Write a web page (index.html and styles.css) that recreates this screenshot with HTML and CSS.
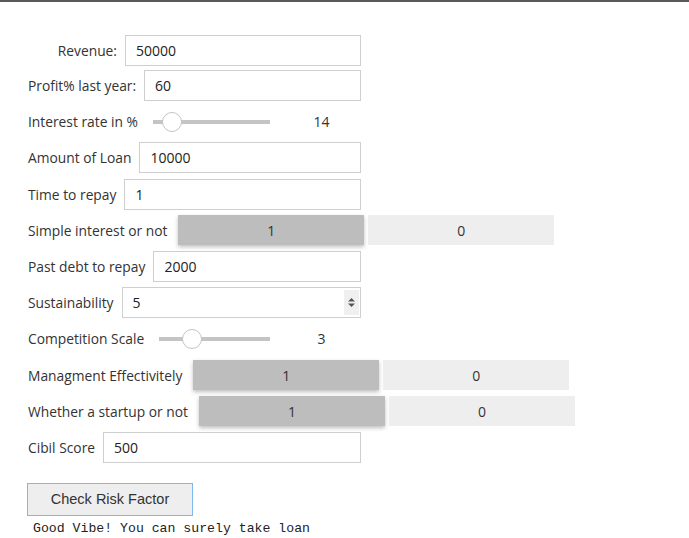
FILE: index.html
```html
<!DOCTYPE html>
<html>
<head>
<meta charset="utf-8">
<link rel="stylesheet" href="styles.css">
</head>
<body>
<div class="topbar"></div>
<div class="form">
  <div class="row">
    <label class="lbl lbl-revenue">Revenue:</label>
    <input class="field" type="text" value="50000">
  </div>
  <div class="row">
    <label class="lbl">Profit% last year:</label>
    <input class="field" type="text" value="60">
  </div>
  <div class="row">
    <label class="lbl">Interest rate in %</label>
    <div class="slider">
      <div class="track"><div class="thumb" style="left:16%"></div></div>
      <div class="readout">14</div>
    </div>
  </div>
  <div class="row">
    <label class="lbl">Amount of Loan</label>
    <input class="field" type="text" value="10000">
  </div>
  <div class="row">
    <label class="lbl">Time to repay</label>
    <input class="field" type="text" value="1">
  </div>
  <div class="row">
    <label class="lbl">Simple interest or not</label>
    <div class="toggles">
      <button class="tog sel">1</button>
      <button class="tog">0</button>
    </div>
  </div>
  <div class="row">
    <label class="lbl">Past debt to repay</label>
    <input class="field" type="text" value="2000">
  </div>
  <div class="row">
    <label class="lbl">Sustainability</label>
    <div class="field numfield">
      <span class="numval">5</span>
      <span class="spin">
        <svg width="9" height="11" viewBox="0 0 9 11"><path d="M4.5 1 L8 4.5 H1 Z M4.5 10 L8 6.5 H1 Z" fill="#555"/></svg>
      </span>
    </div>
  </div>
  <div class="row">
    <label class="lbl">Competition Scale</label>
    <div class="slider">
      <div class="track"><div class="thumb" style="left:30%"></div></div>
      <div class="readout">3</div>
    </div>
  </div>
  <div class="row">
    <label class="lbl">Managment Effectivitely</label>
    <div class="toggles">
      <button class="tog sel">1</button>
      <button class="tog">0</button>
    </div>
  </div>
  <div class="row">
    <label class="lbl">Whether a startup or not</label>
    <div class="toggles">
      <button class="tog sel">1</button>
      <button class="tog">0</button>
    </div>
  </div>
  <div class="row">
    <label class="lbl">Cibil Score</label>
    <input class="field" type="text" value="500">
  </div>
  <button class="check">Check Risk Factor</button>
  <pre class="output">Good Vibe! You can surely take loan</pre>
</div>
</body>
</html>
```

FILE: styles.css
```css
html, body {
  margin: 0;
  padding: 0;
  background: #fff;
}
.topbar {
  height: 2px;
  background: #5a5a5a;
}
.form {
  padding: 33px 0 0 28px;
  font-family: "Open Sans", "Noto Sans", sans-serif;
  font-size: 13.8px;
  color: #333;
}
.row {
  display: flex;
  align-items: center;
  height: 31px;
  margin-bottom: 5.2px;
  width: 333px;
}
.row:first-child {
  margin-bottom: 4px;
}
.lbl {
  flex: none;
  margin-right: 8px;
  white-space: nowrap;
  color: #333;
}
.lbl-revenue {
  width: 89px;
  text-align: right;
}
.field {
  flex: 1;
  box-sizing: border-box;
  height: 31px;
  border: 1px solid #cfcfcf;
  padding: 0 10px;
  font-family: inherit;
  font-size: 14px;
  color: #222;
  background: #fff;
  outline: none;
  min-width: 0;
}
.numfield {
  display: flex;
  align-items: center;
  padding-right: 1px;
}
.numval {
  flex: 1;
}
.spin {
  display: flex;
  align-items: center;
  justify-content: center;
  width: 15px;
  height: 25px;
  background: #f0f0f0;
}
.slider {
  flex: 1;
  display: flex;
  align-items: center;
  padding-left: 7px;
}
.track {
  position: relative;
  flex: 1;
  height: 4px;
  background: #c4c4c4;
  margin-right: 12px;
}
.thumb {
  position: absolute;
  top: 50%;
  width: 18px;
  height: 18px;
  margin: -10px 0 0 -10px;
  border: 1px solid #c4c4c4;
  border-radius: 50%;
  background: #fff;
}
.readout {
  width: 79px;
  text-align: center;
  font-size: 14px;
  color: #333;
}
.toggles {
  display: flex;
  gap: 4px;
  margin-left: 3px;
}
.tog {
  width: 186px;
  height: 30px;
  border: none;
  background: #eeeeee;
  font-family: inherit;
  font-size: 14px;
  color: #333;
  padding: 0;
}
.tog.sel {
  background: #bdbdbd;
  box-shadow: 0 2px 4px rgba(0,0,0,0.25);
}
.check {
  display: block;
  margin: 20px 0 0 -1px;
  width: 166px;
  height: 33px;
  background: #eeeeee;
  border: 1px solid #7fb8ec;
  font-family: "Liberation Sans", Arial, sans-serif;
  font-size: 14.5px;
  color: #333;
  padding: 0;
}
.output {
  margin: 5px 0 0 5px;
  font-family: "Liberation Mono", "DejaVu Sans Mono", monospace;
  font-size: 13.2px;
  color: #222;
}
```
